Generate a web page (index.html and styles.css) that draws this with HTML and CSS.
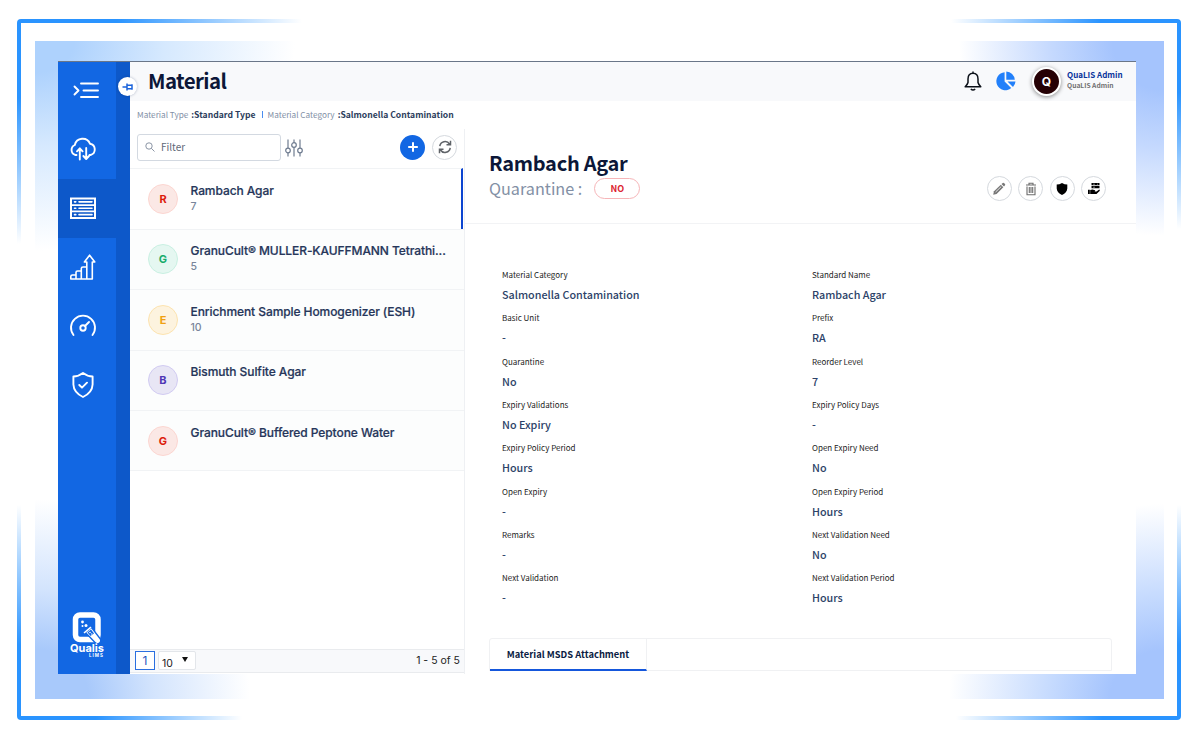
FILE: index.html
```html
<!DOCTYPE html>
<html lang="en">
<head>
<meta charset="utf-8">
<title>Material</title>
<link rel="stylesheet" href="styles.css">
</head>
<body>
<div class="frame">
<div class="glow">
<div class="app">
  <aside class="sidebar">
    <nav class="nav">
      <a class="nav-item"><svg width="28" height="28" viewBox="0 0 28 28"><path d="M9 7.500H26M11.500 14.500H26M9 21H26M2.500 10.500L6.500 14.500L2.500 18.500" class="ln"/></svg></a>
      <a class="nav-item"><svg width="28" height="28" viewBox="0 0 28 28"><path d="M7.500 21H6.500A5.300 5.300 0 0 1 5.800 11A8 8 0 0 1 21 9.700A5.800 5.800 0 0 1 21.500 21H20.500M10.800 25.500V14.500M8 17.300L10.800 14.300L13.600 17.300M17.200 14V24.500M14.400 22L17.200 25L20 22" class="ln"/></svg></a>
      <a class="nav-item active"><svg width="28" height="28" viewBox="0 0 28 28"><path fill="#fff" d="M1 4.500h26v21.500H1z"/><path d="M3 6.500h22v4.700H3zM3 12.900h22v4.700H3zM3 19.300h22v4.700H3z" fill="#0d58c9"/><path d="M10 8.850H23M10 15.250H23M10 21.650H23M5.500 8.850h1.300M5.500 15.250h1.300M5.500 21.650h1.300" class="ln thin"/></svg></a>
      <a class="nav-item"><svg width="28" height="28" viewBox="0 0 28 28"><path d="M1.800 27H23.300V10H25.800L20.600 3.200L15.400 10H17.800V27M1.800 27V24.500Q1.800 23 3.500 23H7V27M7 23V20.500Q7 19 8.500 19H12.300V27M12.300 19V16.500Q12.300 15 14 15H17.600" class="ln thin"/></svg></a>
      <a class="nav-item"><svg width="28" height="28" viewBox="0 0 28 28"><path d="M4.500 24A12 12 0 1 1 23.500 24M16 15L20 11" class="ln"/><circle cx="14" cy="17" r="2.700" class="ln"/></svg></a>
      <a class="nav-item"><svg width="28" height="28" viewBox="0 0 28 28"><path d="M14 3Q18.500 6.500 23.600 6.500V14.500Q23.300 22.500 14 27Q4.700 22.500 4.400 14.500V6.500Q9.500 6.500 14 3ZM10.300 15L13 17.700L18 12.700" class="ln"/></svg></a>
    </nav>
    <div class="brand">
      <svg width="30" height="32" viewBox="0 0 30 32"><rect x="3.500" y="4" width="22.500" height="24.500" rx="4.500" fill="none" stroke="#fff" stroke-width="5.500"/><circle cx="10.500" cy="11" r="1.400" fill="#fff"/><circle cx="10.500" cy="15" r="1" fill="#fff"/><circle cx="14" cy="14.500" r="1.500" fill="#fff"/><path d="M13.500 21.500L19.500 16.500L28 27.500A3.200 3.200 0 0 1 23 31.500Z" fill="#fff" stroke="#1267e3" stroke-width="1.300"/><path d="M12 22L19 16.200" stroke="#fff" stroke-width="1.600"/><path d="M15.500 21.500L19 18.500L22 22.500L18.500 25Z" fill="#1267e3"/><circle cx="18" cy="21.500" r=".8" fill="#fff"/><circle cx="19.800" cy="23" r=".7" fill="#fff"/></svg>
      <b>Qualis</b><small>LIMS</small>
    </div>
    <span class="pin"><svg width="12" height="10" viewBox="0 0 12 10"><path d="M.5 5H5M5 1.500V8.500M5 3.300H10M5 6.700H10M10 2.300V7.700" fill="none" stroke="#1c64dc" stroke-width="1.500"/></svg></span>
  </aside>
  <div class="main">
    <header class="topbar">
      <h1>Material</h1>
      <svg class="bell" width="18" height="20" viewBox="0 0 18 20"><path d="M9 2.200C5.300 2.200 4 5 4 8V11.500Q3.500 13.500 1.200 15.700H16.800Q14.500 13.500 14 11.500V8C14 5 12.700 2.200 9 2.200ZM9 .5V2M6.800 18Q9 20 11.200 18" fill="none" stroke="#0b1018" stroke-width="1.500" stroke-linejoin="round"/></svg>
      <svg class="pie" width="20" height="20" viewBox="0 0 20 20"><path d="M8.600 1.200V10.500L15.200 17A9 9 0 1 1 8.600 1.200ZM10.300 .5A9 9 0 0 1 18.800 8.800H10.300ZM11.500 10.500H19.500A9 9 0 0 1 17 16Z" fill="#2280fa"/></svg>
      <span class="avatar">Q</span>
      <div class="user"><b>QuaLIS Admin</b><span>QuaLIS Admin</span></div>
    </header>
    <div class="crumbs"><span>Material Type</span><b>:Standard Type</b><i></i><span>Material Category</span><b>:Salmonella Contamination</b></div>
    <div class="body">
      <section class="list">
        <div class="tools">
          <div class="filter"><svg width="10" height="10" viewBox="0 0 10 10"><circle cx="4" cy="4" r="3.200" fill="none" stroke="#8b95a5"/><path d="M6.300 6.300L9.500 9.500" stroke="#8b95a5"/></svg>Filter</div>
          <svg class="sliders" width="18" height="18" viewBox="0 0 18 18"><g fill="none" stroke="#6f7c90" stroke-width="1.200"><path d="M3 .5V9M3 14V17.500M9 .5V3.500M9 8.500V17.500M15 .5V9M15 14V17.500"/><circle cx="3" cy="11.500" r="2.300"/><circle cx="9" cy="6" r="2.300"/><circle cx="15" cy="11.500" r="2.300"/></g></svg>
          <span class="add"><svg width="12" height="12" viewBox="0 0 12 12"><path d="M6 1.200V10.800M1.200 6H10.800" stroke="#fff" stroke-width="2"/></svg></span>
          <span class="round"><svg width="14" height="14" viewBox="0 0 14 14"><path d="M1.800 6.200A5.300 5.300 0 0 1 11.500 4M12.500 .8V4.800H8.500M12.200 7.800A5.300 5.300 0 0 1 2.500 10M1.500 13.200V9.200H5.500" fill="none" stroke="#5f6368" stroke-width="1.500"/></svg></span>
        </div>
        <div class="row selected"><span class="badge red">R</span><div><p>Rambach Agar</p><small>7</small></div></div>
        <div class="row"><span class="badge green">G</span><div><p>GranuCult® MULLER-KAUFFMANN Tetrathi...</p><small>5</small></div></div>
        <div class="row"><span class="badge amber">E</span><div><p>Enrichment Sample Homogenizer (ESH)</p><small>10</small></div></div>
        <div class="row"><span class="badge violet">B</span><div><p>Bismuth Sulfite Agar</p></div></div>
        <div class="row"><span class="badge red">G</span><div><p>GranuCult® Buffered Peptone Water</p></div></div>
        <footer class="pager"><span class="page">1</span><span class="size">10<i></i></span><span class="count">1 - 5 of 5</span></footer>
      </section>
      <section class="detail">
        <div class="head">
          <div class="heading"><h2>Rambach Agar</h2><div class="quar"><span>Quarantine :</span><b>NO</b></div></div>
          <div class="actions">
            <span class="round"><svg width="14" height="14" viewBox="0 0 14 14"><path d="M1.200 12.800L2 9.300L8.800 2.800L11.300 5.300L4.600 12Z" fill="#777"/><path d="M9.500 2.100L10.800 1Q11.500.6 12.200 1.200L13 2Q13.500 2.700 13 3.300L12 4.600Z" fill="#777"/><path d="M3.600 10L9.200 4.600" stroke="#fff" stroke-width=".8"/></svg></span>
            <span class="round"><svg width="14" height="14" viewBox="0 0 14 14"><path d="M2 3H12M5 2.500V1.200H9V2.500M3 4.500V12.700H11V4.500M5.300 5V11M7 5V11M8.700 5V11" fill="none" stroke="#6c6c6c" stroke-width="1.100"/></svg></span>
            <span class="round"><svg width="14" height="14" viewBox="0 0 14 14"><path d="M7 1Q9.500 2.500 12.300 2.600V6.500Q12 10.500 7 13Q2 10.500 1.700 6.500V2.600Q4.500 2.500 7 1Z" fill="#000"/></svg></span>
            <span class="round"><svg width="14" height="14" viewBox="0 0 14 14"><path d="M4.500 1H12.500V3.300H4.500ZM4.500 4H12.500V6.300H4.500ZM1 7.800H2.800V12H1ZM3.200 8L5.500 7.500L8 8.300Q8.700 9.200 7.500 9.500L9.500 9.400L12.200 7.500Q13.300 8 12.600 8.900L9.500 12H3.200Z"/><path d="M6 2.200H8M10 2.200H11M6 5.200H8" stroke="#fff" stroke-width=".5"/></svg></span>
          </div>
        </div>
        <dl class="fields">
          <div><dt>Material Category</dt><dd>Salmonella Contamination</dd></div><div><dt>Standard Name</dt><dd>Rambach Agar</dd></div>
          <div><dt>Basic Unit</dt><dd>-</dd></div><div><dt>Prefix</dt><dd>RA</dd></div>
          <div><dt>Quarantine</dt><dd>No</dd></div><div><dt>Reorder Level</dt><dd>7</dd></div>
          <div><dt>Expiry Validations</dt><dd>No Expiry</dd></div><div><dt>Expiry Policy Days</dt><dd>-</dd></div>
          <div><dt>Expiry Policy Period</dt><dd>Hours</dd></div><div><dt>Open Expiry Need</dt><dd>No</dd></div>
          <div><dt>Open Expiry</dt><dd>-</dd></div><div><dt>Open Expiry Period</dt><dd>Hours</dd></div>
          <div><dt>Remarks</dt><dd>-</dd></div><div><dt>Next Validation Need</dt><dd>No</dd></div>
          <div><dt>Next Validation</dt><dd>-</dd></div><div><dt>Next Validation Period</dt><dd>Hours</dd></div>
        </dl>
        <div class="tabs"><span>Material MSDS Attachment</span></div>
      </section>
    </div>
  </div>
</div>
</div>
</div>
</body>
</html>
```
FILE: styles.css
```css
* { box-sizing: border-box; margin: 0; padding: 0; }
body {
  width: 1200px; height: 735px; padding: 19px 0 0 17px; overflow: hidden;
  background: #fff; font-family: "Noto Sans CJK SC", "Noto Sans", sans-serif; color: #26395c;
}
svg { display: block; flex: none; }
.frame {
  width: 1164px; height: 701px; padding: 4px; border-radius: 4px;
  background:
    radial-gradient(ellipse 285px 225px at 0 0, #2a94ff 35%, transparent),
    radial-gradient(ellipse 230px 210px at 100% 0, #2a94ff 35%, transparent),
    radial-gradient(ellipse 225px 215px at 0 100%, #2a94ff 35%, transparent),
    radial-gradient(ellipse 225px 215px at 100% 100%, #2a94ff 35%, transparent), #fff;
}
.glow {
  width: 1156px; height: 693px; padding: 20px 23px 19px 20px;
  border: solid #fff; border-width: 18px 13px 17px 14px;
  background:
    radial-gradient(ellipse 260px 210px at 0 0, #aed2fd 15%, #d6e9fe 50%, transparent),
    radial-gradient(ellipse 205px 195px at 100% 0, #a5c4fd 25%, #c5d9fe 55%, transparent),
    radial-gradient(ellipse 215px 200px at 0 100%, #a8c9fb 25%, #d3e4fd 55%, transparent),
    radial-gradient(ellipse 215px 195px at 100% 100%, #a5c4fd 25%, #c8dcfe 55%, transparent), #fff;
  background-origin: padding-box; background-clip: padding-box;
  background-repeat: no-repeat;
}
.app { width: 1078px; height: 613px; margin-left: 3px; display: flex; background: #fff; border-top: 1px solid #6a7688; }

.sidebar { position: relative; width: 72px; height: 612px; display: flex; flex-direction: column; justify-content: space-between; background: linear-gradient(90deg, #1267e3 58px, #0d58c9 58px); }
.nav-item { display: flex; width: 58px; height: 59px; padding: 14px 0 0 11px; }
.nav-item:first-child { height: 58px; padding-left: 14px; }
.nav-item.active { width: 72px; background: #0d58c9; }
.ln { fill: none; stroke: #fff; stroke-width: 1.9; stroke-linejoin: round; stroke-linecap: round; }
.thin { stroke-width: 1.600; }
.brand { width: 58px; height: 63px; display: flex; flex-direction: column; align-items: center; color: #fff; font-family: Inter, sans-serif; }
.brand b { font-size: 11px; line-height: 11px; font-weight: 700; }
.brand small { font-size: 4.500px; line-height: 3px; margin-left: 19px; letter-spacing: 1px; font-weight: 700; }
.pin { position: absolute; left: 60px; top: 15px; width: 19px; height: 19px; border-radius: 50%; background: #fff; display: grid; place-items: center; box-shadow: 0 0 3px rgba(0,30,80,.3); }

.main { flex: 1; display: flex; flex-direction: column; min-width: 0; }
.topbar { height: 39px; display: flex; align-items: center; background: #f8f9fb; padding: 0 13px 0 18px; }
h1 { font-size: 20.500px; line-height: 34px; font-weight: 700; letter-spacing: -.6px; color: #0c1738; margin: 0 auto 3px 0; }
.bell { margin: 0 14px 2px 0; }
.pie { margin: 0 16px 2px 0; }
.avatar { width: 29px; height: 29px; border-radius: 50%; background: #250004; border: 2px solid #fff; box-shadow: 0 1px 4px rgba(0,0,0,.45); color: #fff; font: 700 12px/25px Inter, sans-serif; text-align: center; margin-right: 6px; }
.user { width: 56px; display: flex; flex-direction: column; white-space: nowrap; margin-bottom: 4px; }
.user b { font-size: 8px; line-height: 10px; color: #08349b; }
.user span { font-size: 6.700px; line-height: 10px; font-weight: 700; color: #707070; }
.crumbs { height: 28px; display: flex; align-items: center; padding: 0 0 3px 7px; font-size: 8.600px; color: #8290a6; white-space: nowrap; }
.crumbs span { font-size: 8.200px; }
.crumbs b { font-weight: 700; color: #2c3d5c; margin-left: 3px; }
.crumbs i { width: 1px; height: 7px; background: #4a8df0; margin: 2px 5px 0 6px; }
.body { flex: 1; display: flex; }

.list { width: 335px; display: flex; flex-direction: column; border-right: 1px solid #eef0f3; font-family: Inter, sans-serif; }
.tools { height: 39px; display: flex; align-items: center; padding: 0 7px 3px; }
.filter { width: 144px; height: 27px; border: 1px solid #d3d9e1; border-radius: 3px; display: flex; align-items: center; gap: 6px; padding: 0 0 1px 7px; font: 10px "Noto Sans CJK SC", sans-serif; color: #5f6877; }
.sliders { margin: 1px auto 0 4px; }
.add { width: 25px; height: 25px; border-radius: 50%; background: #1267e3; display: grid; place-items: center; margin-right: 7px; }
.round { width: 25px; height: 25px; border-radius: 50%; border: 1px solid #d5d9de; background: #fff; display: grid; place-items: center; }
.row { height: 60.600px; flex: none; display: flex; gap: 12.500px; padding: 14.500px 0 0 18px; border-top: 1px solid #f1f3f5; background: #fcfdfd; }
.row:nth-last-child(2) { border-bottom: 1px solid #f1f3f5; }
.row.selected { background: #fff; border-right: 2px solid #0c45d0; margin-right: 1px; }
.row p { font-size: 12px; line-height: 14px; font-weight: 500; letter-spacing: -.08px; color: #26365a; white-space: nowrap; -webkit-text-stroke: .2px #26365a; }
.row small { display: block; font-size: 10.500px; line-height: 17px; font-weight: 500; color: #78859a; }
.badge { width: 30px; height: 30px; border-radius: 50%; border: 1px solid; display: grid; place-items: center; font-size: 11px; font-weight: 700; }
.red { color: #dc1c0c; background: #fbe8e5; border-color: #fcd6d1; }
.green { color: #17ac6b; background: #e5f7f1; border-color: #c9f0e2; }
.amber { color: #f0a010; background: #fdf3df; border-color: #fce3af; }
.violet { color: #5038b5; background: #e8e6f5; border-color: #d1cbf2; }
.pager { height: 24px; margin-top: auto; margin-bottom: 1px; display: flex; align-items: center; padding: 0 4px 1px 5px; background: #f8f9fb; border: solid #e9ebee; border-width: 1px 0; font-size: 10.500px; color: #222; }
.page { width: 20px; height: 19px; border: 1px solid #2a6fe0; color: #1e55bf; text-align: center; font-size: 12px; line-height: 17px; background: #fff; }
.size { width: 38px; height: 19px; margin-left: 3px; border: 1px solid #e3e6ea; border-radius: 2px; background: #fff; padding: 4px 0 0 3px; display: flex; align-items: flex-start; line-height: 15px; }
.size i { margin: 1px 0 0 9px; border: 3.500px solid transparent; border-top: 5px solid #111; border-bottom: 0; }
.count { margin-left: auto; }

.detail { flex: 1; display: flex; flex-direction: column; }
.head { height: 95px; display: flex; justify-content: space-between; border-bottom: 1px solid #f2f3f5; padding: 20px 30px 0 24px; }
h2 { font-size: 20px; line-height: 28px; font-weight: 700; letter-spacing: -.27px; color: #0c1738; }
.quar { display: flex; align-items: center; font-size: 16.200px; line-height: 20px; margin-top: -1px; color: #8390a5; }
.quar b { width: 46px; height: 21px; margin: 2px 0 0 12px; border: 1px solid #f6b5b8; border-radius: 11px; color: #dc2430; font-size: 9px; line-height: 19px; text-align: center; }
.actions { display: flex; gap: 6.500px; margin-top: 27px; }
.fields { display: grid; grid-template-columns: 310px 1fr; grid-auto-rows: 43.350px; padding: 43px 0 0 37px; white-space: nowrap; }
dt { font-size: 8px; line-height: 16px; color: #222; }
dd { font-size: 10.750px; line-height: 23px; font-weight: 500; color: #2c4268; }
.tabs { width: 623px; height: 33px; margin: auto 0 3px 24px; border: 1px solid #f0f1f3; border-radius: 3px 3px 0 0; display: flex; }
.tabs span { width: 157px; height: 32px; border-right: 1px solid #f0f1f3; border-bottom: 2px solid #1557dc; text-align: center; font-size: 9.350px; line-height: 31px; font-weight: 700; color: #0a1b42; white-space: nowrap; }
```
